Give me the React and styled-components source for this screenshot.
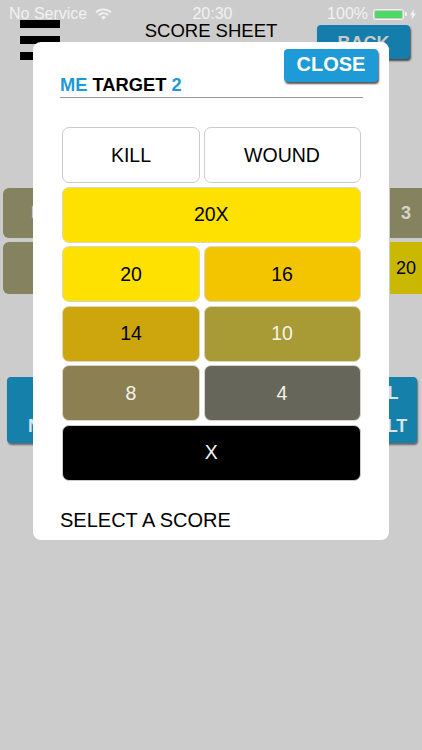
import React from "react";
import styled, { createGlobalStyle } from "styled-components";

const Global = createGlobalStyle`
  html, body { margin: 0; padding: 0; background: #cccccc; }
  * { box-sizing: border-box; }
  body { font-family: "Liberation Sans", Arial, sans-serif; }
`;

const Page = styled.div`
  position: relative;
  width: 422px;
  height: 750px;
  overflow: hidden;
  background: #cccccc;
  display: flex;
  flex-direction: column;
`;

const StatusBar = styled.div`
  height: 28px;
  padding: 5px 6px 0 9px;
  display: grid;
  grid-template-columns: 1fr auto 1fr;
  align-items: start;
  color: #f2f2f2;
  font-size: 16px;
  line-height: 18px;
`;
const StatusLeft = styled.div`
  display: flex;
  align-items: center;
  gap: 8px;
`;
const StatusRight = styled.div`
  display: flex;
  align-items: center;
  justify-content: flex-end;
  gap: 5px;
`;
const Battery = styled.div`
  width: 31px;
  height: 11px;
  border: 1px solid #f2f2f2;
  border-radius: 2.5px;
  padding: 1px;
  margin-right: 1px;
  position: relative;
  &::before {
    content: "";
    display: block;
    height: 100%;
    background: #4cd964;
    border-radius: 1px;
  }
  &::after {
    content: "";
    position: absolute;
    right: -3.5px;
    top: 2.5px;
    width: 2px;
    height: 4px;
    background: #f2f2f2;
    border-radius: 0 1px 1px 0;
  }
`;

const Header = styled.div`
  margin-top: -8px;
  padding: 0 12px 0 20px;
  height: 40px;
  display: grid;
  grid-template-columns: 40px 1fr 93px;
  align-items: start;
`;
const Menu = styled.div`
  display: flex;
  flex-direction: column;
  gap: 8px;
`;
const MenuBar = styled.div`
  height: 8px;
  background: #000;
`;
const Title = styled.div`
  text-align: center;
  font-size: 18.5px;
  line-height: 15px;
  color: #000;
  padding: 3px 0 0 45px;
`;
const BackButton = styled.div`
  margin-top: 5px;
  height: 34px;
  border-radius: 4px;
  background: #157dab;
  box-shadow: 1px 2px 2px #4a4a4a;
  color: #c9c9c9;
  font-weight: bold;
  font-size: 18px;
  line-height: 36px;
  text-align: center;
`;

const Rows = styled.div`
  margin-top: 128px;
  padding: 0 0 0 3px;
  display: flex;
  flex-direction: column;
  gap: 4px;
`;
const Row = styled.div`
  height: ${(p) => p.$h}px;
  display: flex;
  justify-content: space-between;
`;
const Cell = styled.div`
  width: ${(p) => p.$w}px;
  background: ${(p) => p.$bg || "#84825f"};
  color: ${(p) => p.$fg || "#d4d4c8"};
  border-radius: ${(p) => p.$r || "6px 0 0 6px"};
  display: flex;
  align-items: center;
  justify-content: center;
  font-size: ${(p) => p.$size || 18}px;
  font-weight: ${(p) => p.$weight || "bold"};
`;

const Actions = styled.div`
  margin-top: 83px;
  padding: 0 5px 0 7px;
  display: flex;
  justify-content: space-between;
`;
const ActionButton = styled.div`
  width: 90px;
  height: 66px;
  border-radius: 4px;
  background: #1581ab;
  box-shadow: 1px 2px 2px #666;
  color: #d8e4ea;
  font-weight: bold;
  font-size: 18px;
  line-height: 33px;
  text-align: center;
`;

const Modal = styled.div`
  position: absolute;
  left: 33px;
  top: 42px;
  width: 356px;
  height: 498px;
  background: #fff;
  border-radius: 8px;
  padding: 0 26px 0 27px;
  display: flex;
  flex-direction: column;
`;
const CloseButton = styled.div`
  position: absolute;
  left: 251px;
  top: 7px;
  width: 94px;
  height: 33px;
  background: #1e9ad6;
  border-radius: 4px;
  box-shadow: 1px 2px 2px #555;
  color: #fff;
  font-weight: bold;
  font-size: 20px;
  line-height: 31px;
  text-align: center;
`;
const Heading = styled.div`
  margin-top: 33px;
  height: 23px;
  border-bottom: 1.5px solid #999;
  font-weight: bold;
  font-size: 18.3px;
  line-height: 20px;
  color: #000;
`;
const Accent = styled.span`
  color: #1e9ad6;
`;
const Grid = styled.div`
  margin: 29px 0 0 2px;
  display: grid;
  grid-template-columns: 138px 157px;
  grid-auto-rows: 56px;
  gap: 3.5px;
`;
const ScoreButton = styled.div`
  grid-column: ${(p) => (p.$wide ? "1 / -1" : "auto")};
  background: ${(p) => p.$bg};
  color: ${(p) => p.$fg || "#000"};
  border: 1.5px solid ${(p) => p.$line || "#d9d7c8"};
  border-radius: 7px;
  display: flex;
  align-items: center;
  justify-content: center;
  font-size: ${(p) => p.$size || 19.5}px;
`;
const Prompt = styled.div`
  margin-top: 28px;
  font-size: 20px;
  line-height: 23px;
  color: #000;
`;

const scores = [
  { t: "KILL", bg: "#fff", line: "#cccccc" },
  { t: "WOUND", bg: "#fff", line: "#cccccc" },
  { t: "20X", bg: "#ffe100", wide: true },
  { t: "20", bg: "#ffe100" },
  { t: "16", bg: "#f2c500" },
  { t: "14", bg: "#cda60e" },
  { t: "10", bg: "#a89a35", fg: "#f4f4ea" },
  { t: "8", bg: "#8c7f52", fg: "#f4f4ea" },
  { t: "4", bg: "#66675a", fg: "#f4f4ea" },
  { t: "X", bg: "#000", fg: "#f4f4f4", wide: true, line: "#cccccc" },
];

export default function App() {
  return (
    <Page>
      <Global />
      <StatusBar>
        <StatusLeft>
          <span>No Service</span>
          <svg width="17" height="12" viewBox="0 0 16 11" fill="none" stroke="#f2f2f2" strokeWidth="1.7">
            <path d="M1 4a10 10 0 0 1 14 0" />
            <path d="M3.5 6.5a6.5 6.5 0 0 1 9 0" />
            <path d="M8 10.8 5.7 8.5a3.2 3.2 0 0 1 4.6 0Z" fill="#f2f2f2" stroke="none" />
          </svg>
        </StatusLeft>
        <span>20:30</span>
        <StatusRight>
          <span>100%</span>
          <Battery />
          <svg width="6" height="11" viewBox="0 0 6 11">
            <path d="M4 0 0 6.2h2.2L1.6 11 6 4.6H3.6Z" fill="#f2f2f2" />
          </svg>
        </StatusRight>
      </StatusBar>
      <Header>
        <Menu>
          <MenuBar />
          <MenuBar />
          <MenuBar />
        </Menu>
        <Title>SCORE SHEET</Title>
        <BackButton>BACK</BackButton>
      </Header>
      <Rows>
        <Row $h={50}>
          <Cell $w={80} $size={16}>ME</Cell>
          <Cell $w={32} $r="0">3</Cell>
        </Row>
        <Row $h={52}>
          <Cell $w={80} />
          <Cell $w={32} $r="0" $bg="#c9b700" $fg="#000" $weight="normal">20</Cell>
        </Row>
      </Rows>
      <Actions>
        <ActionButton>ADD<br />NEXT</ActionButton>
        <ActionButton>FINAL<br />RESULT</ActionButton>
      </Actions>
      <Modal>
        <CloseButton>CLOSE</CloseButton>
        <Heading>
          <Accent>ME</Accent> TARGET <Accent>2</Accent>
        </Heading>
        <Grid>
          {scores.map((s) => (
            <ScoreButton key={s.t} $bg={s.bg} $fg={s.fg} $wide={s.wide} $line={s.line}>
              {s.t}
            </ScoreButton>
          ))}
        </Grid>
        <Prompt>SELECT A SCORE</Prompt>
      </Modal>
    </Page>
  );
}
